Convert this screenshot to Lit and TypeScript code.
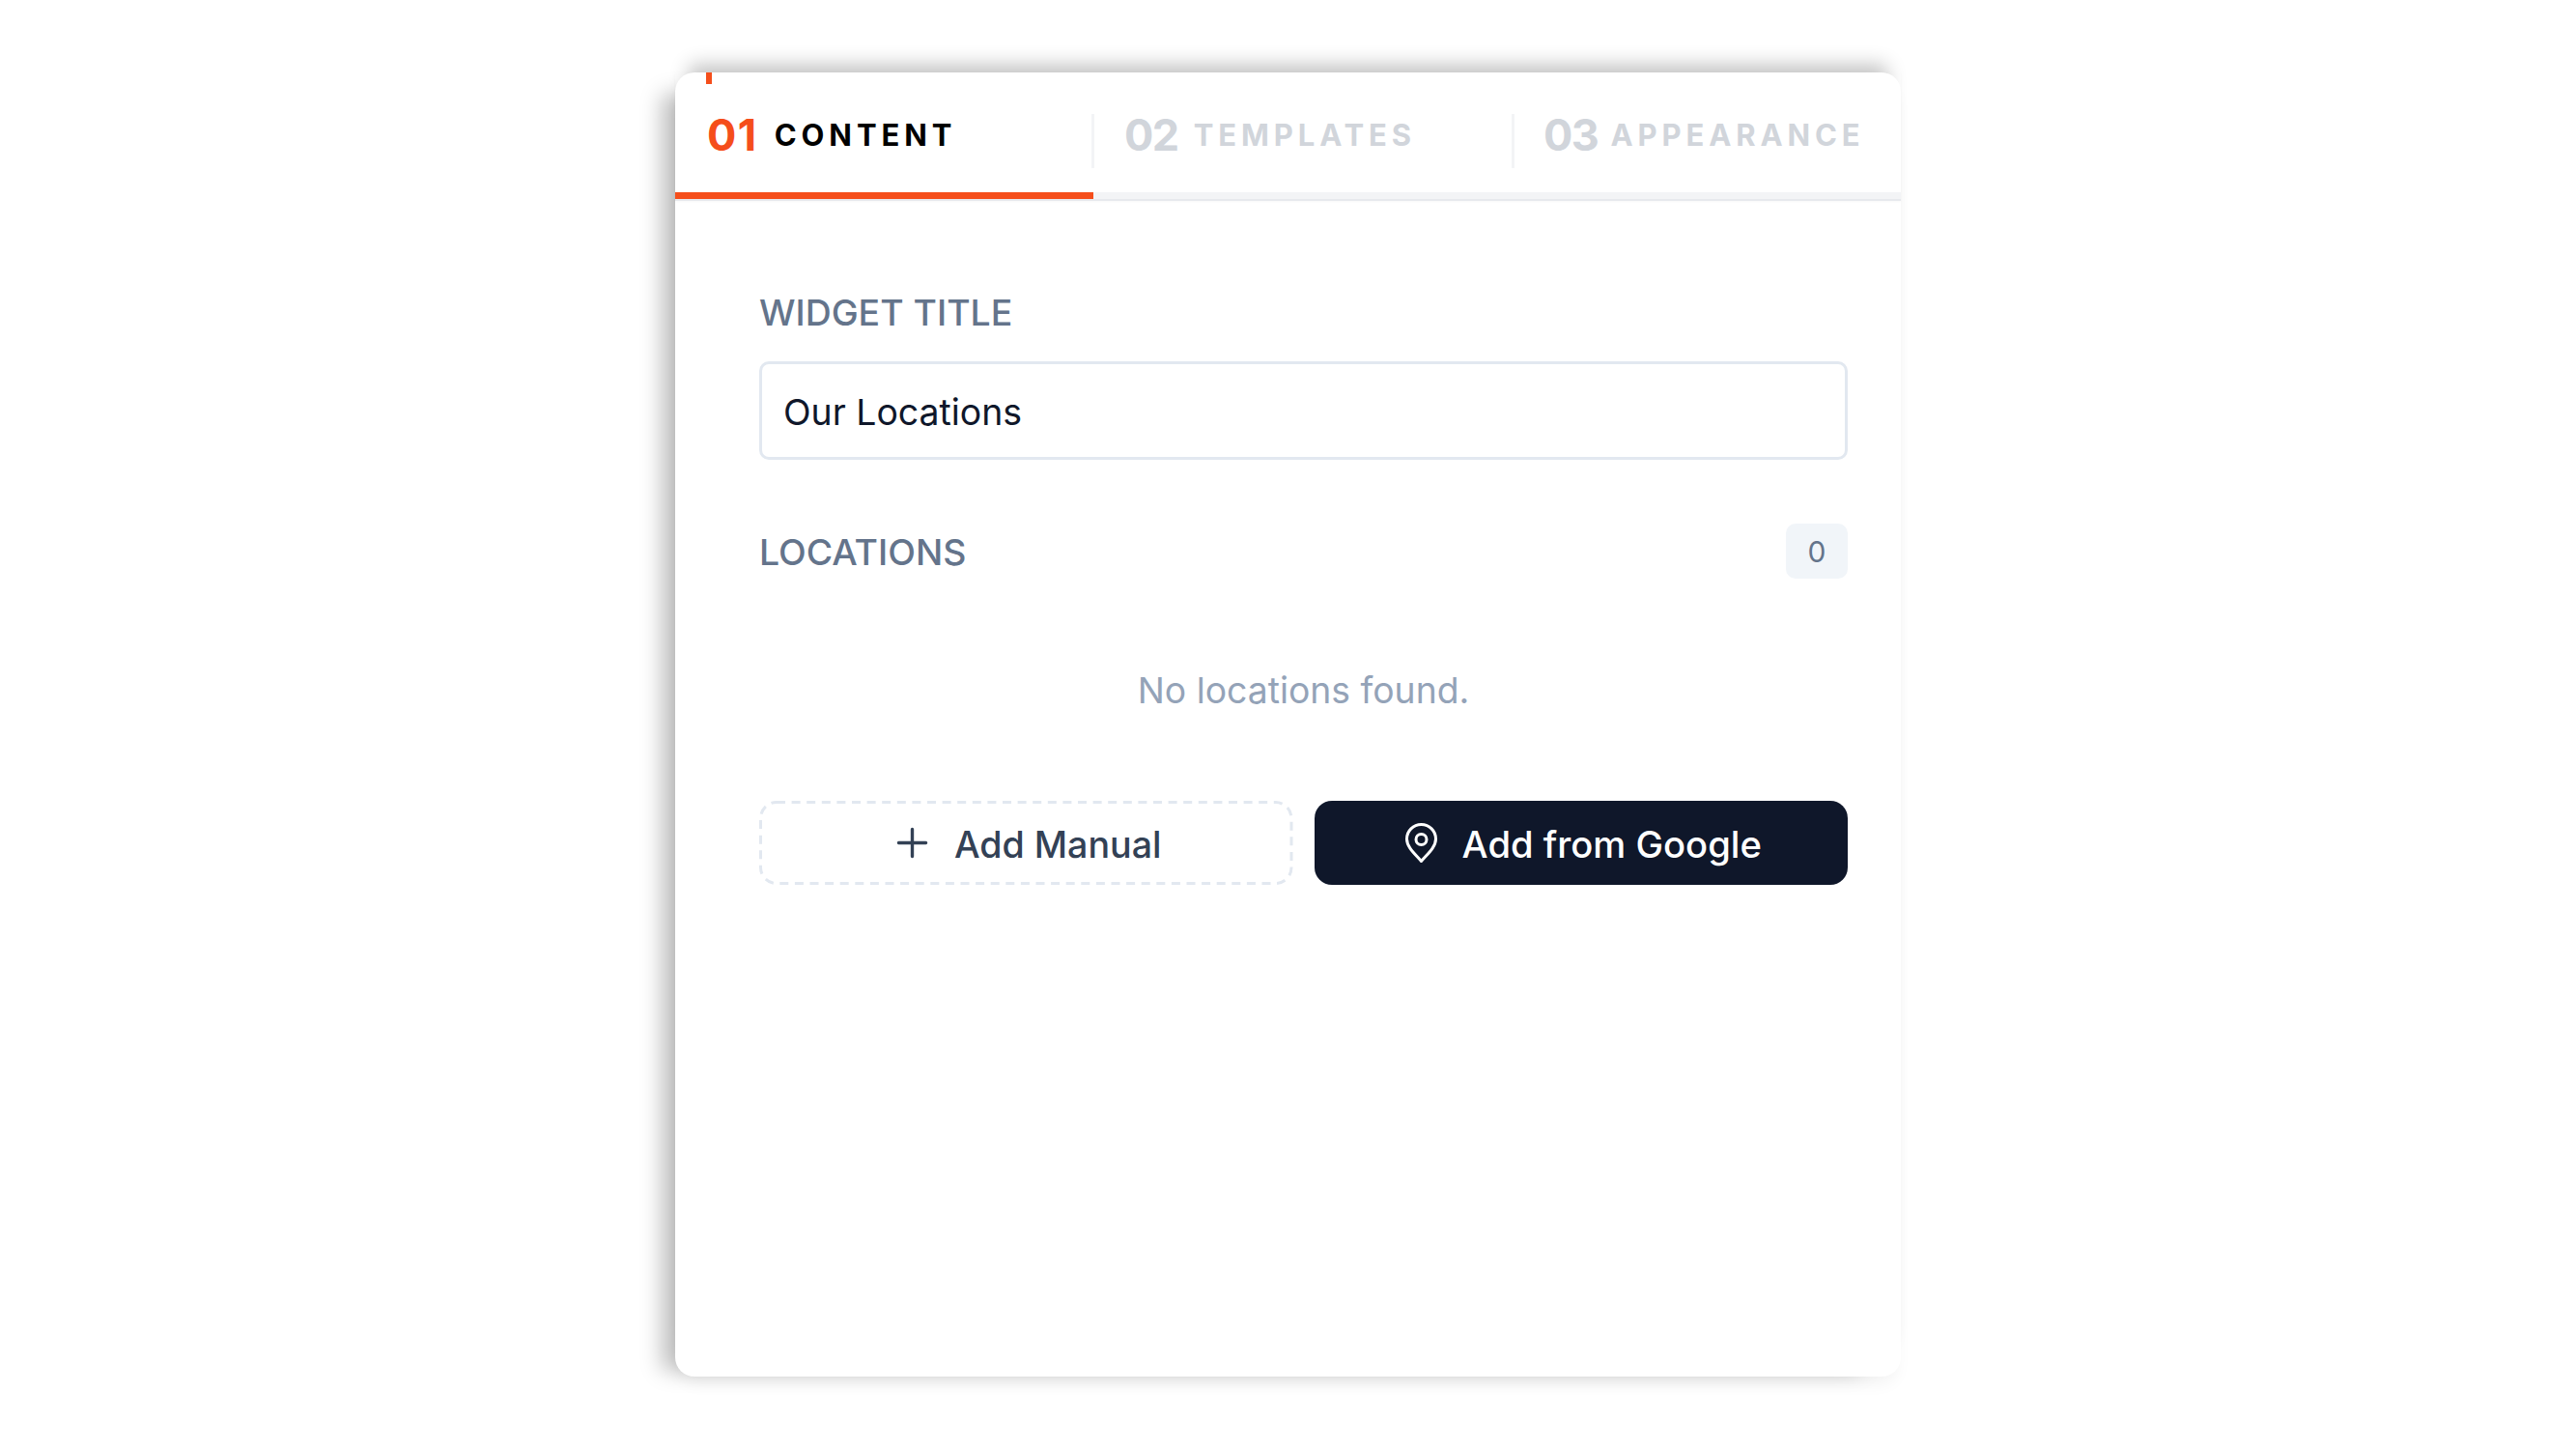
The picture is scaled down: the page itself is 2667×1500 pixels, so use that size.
import { LitElement, html, css } from "lit";
import { customElement } from "lit/decorators.js";

@customElement("app-root")
export class AppRoot extends LitElement {
  static styles = css`
    :host { display: block; width: 2667px; height: 1500px; background: #fff; font-family: Inter, "Liberation Sans", sans-serif; padding: 75px 0 0 699px; box-sizing: border-box; }
    .card { position: relative; width: 1269px; height: 1350px; background: #fff; border-radius: 20px; box-shadow: 0 -22px 20px -14px rgba(0,0,0,.24), -28px 8px 22px -14px rgba(0,0,0,.25), 0 12px 18px -6px rgba(0,0,0,.06); box-sizing: border-box; }
    .mark { position: absolute; left: 32px; top: 0; width: 6px; height: 12px; background: #f54e1b; }
    .tabs { display: grid; grid-template-columns: 433px 435px 1fr; height: 133px; box-sizing: border-box; border-bottom: 2px solid #e7e9ed; box-shadow: 0 1px 2px rgba(0,0,0,.03); }
    .tab { display: flex; align-items: center; gap: 16px; height: 131px; box-sizing: border-box; border-bottom: 7px solid #f3f4f6; padding: 5px 0 0 32px; position: relative; }
    .tab:nth-child(3) { padding-left: 31px; gap: 13px; }
    .tab.active { border-bottom-color: #f54e1b; padding-left: 33px; gap: 17px; }
    .tab + .tab::before { content: ""; position: absolute; left: -2px; top: 43px; width: 3px; height: 56px; background: #f3f4f6; }
    .num { font-size: 45px; font-weight: 700; line-height: 60px; letter-spacing: -1.5px; color: #d1d5db; }
    .active .num { color: #f54e1b; letter-spacing: 1.5px; }
    .name { font-size: 31px; font-weight: 700; line-height: 60px; letter-spacing: 4.9px; color: #d1d5db; white-space: nowrap; }
    .active .name { color: #000; }
    .body { padding: 94px 55px 0 87px; }
    .label { font-size: 37.4px; line-height: 44px; font-weight: 500; color: #64748b; }
    .row .label { padding-top: 2px; }
    .input { margin-top: 28px; height: 102px; box-sizing: border-box; border: 3px solid #e2e8f0; border-radius: 10px; padding: 2px 22px 0; display: flex; align-items: center; font-size: 37.4px; color: #0f172a; }
    .row { margin-top: 66px; display: flex; justify-content: space-between; align-items: center; }
    .badge { width: 64px; height: 57px; border-radius: 10px; background: #f1f5f9; color: #64748b; font-size: 30px; display: flex; align-items: center; justify-content: center; }
    .empty { margin-top: 94px; text-align: center; font-size: 37.3px; line-height: 44px; color: #94a3b8; }
    .actions { margin-top: 92px; display: grid; grid-template-columns: 1fr 1fr; gap: 22px; }
    .btn { height: 87px; box-sizing: border-box; border-radius: 18px; display: flex; align-items: center; justify-content: center; font-size: 37.6px; font-weight: 500; position: relative; }
    .btn span { padding-top: 2px; }
    .manual { color: #334155; gap: 21px; }
    .manual span { padding-top: 3px; }
    .dash { position: absolute; left: 0; top: 0; }
    .google { background: #0f172a; color: #fff; gap: 26px; font-size: 38.2px; padding-left: 5px; }
    svg { display: block; flex: none; }
  `;

  render() {
    return html`
      <div class="card">
        <div class="mark"></div>
        <div class="tabs">
          <div class="tab active"><span class="num">01</span><span class="name">CONTENT</span></div>
          <div class="tab"><span class="num">02</span><span class="name">TEMPLATES</span></div>
          <div class="tab"><span class="num">03</span><span class="name">APPEARANCE</span></div>
        </div>
        <div class="body">
          <div class="label">WIDGET TITLE</div>
          <div class="input">Our Locations</div>
          <div class="row"><span class="label">LOCATIONS</span><span class="badge">0</span></div>
          <div class="empty">No locations found.</div>
          <div class="actions">
            <div class="btn manual">
              <svg class="dash" width="100%" height="87" fill="none"><rect x="1.5" y="1.5" width="calc(100% - 3px)" height="84" rx="16.5" stroke="#e2e8f0" stroke-width="3" stroke-dasharray="9 6.6"/></svg>
              <svg width="45" height="45" viewBox="0 0 24 24" fill="none" stroke="currentColor" stroke-width="1.8" stroke-linecap="round"><path d="M12 4.5v15m7.5-7.5h-15"/></svg>
              <span>Add Manual</span>
            </div>
            <div class="btn google">
              <svg width="33" height="41" viewBox="0 0 33 41" fill="none" stroke="currentColor" stroke-width="3" stroke-linejoin="round"><path d="M16.5 39.5C10 32 1.5 25 1.5 16.5a15 15 0 0 1 30 0C31.5 25 23 32 16.5 39.5Z"/><circle cx="16.5" cy="17" r="5.5"/></svg>
              <span>Add from Google</span>
            </div>
          </div>
        </div>
      </div>
    `;
  }
}
